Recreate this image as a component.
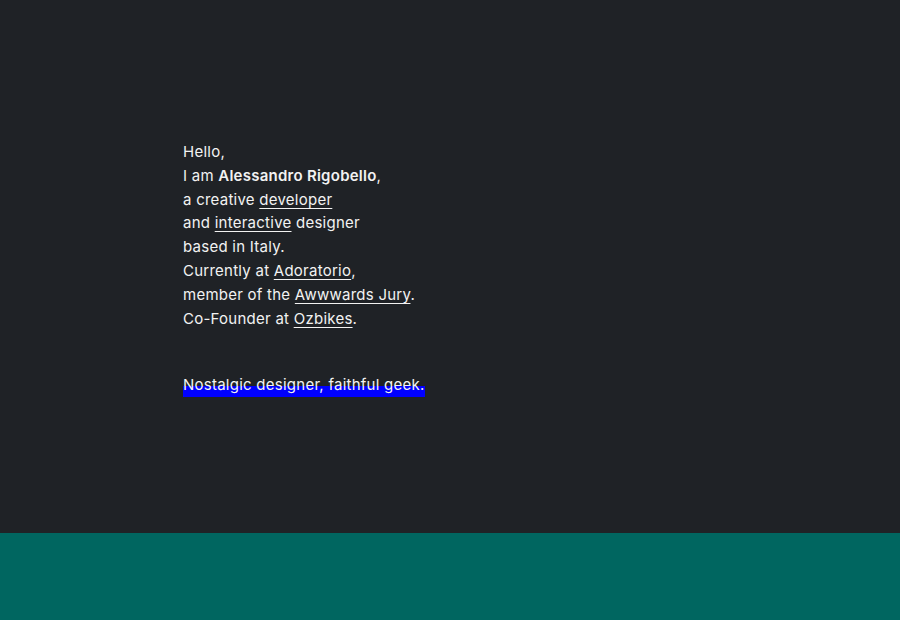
const links = 'underline decoration-1 underline-offset-[3px]'

export default function App() {
  return (
    <div className="min-h-[620px] w-full bg-[#006660] font-['Inter',sans-serif]">
      <section className="h-[533px] bg-[#1f2226] pl-[183px] pt-[140px] text-[15px] leading-[23.8px] tracking-[0.25px] text-[#f2f2f2]">
        <p>
          Hello,
          <br />I am <strong className="font-semibold">Alessandro Rigobello</strong>,
          <br />a creative <a className={links}>developer</a>
          <br />and <a className={links}>interactive</a> designer
          <br />based in Italy.
          <br />Currently at <a className={links}>Adoratorio</a>,
          <br />member of the <a className={links}>Awwwards Jury</a>.
          <br />Co-Founder at <a className={links}>Ozbikes</a>.
        </p>
        <p className="mt-[43px]">
          <span className="bg-[linear-gradient(transparent_52%,#0000ff_52%)] pb-[3px]">
            Nostalgic designer, faithful geek.
          </span>
        </p>
      </section>
    </div>
  )
}
